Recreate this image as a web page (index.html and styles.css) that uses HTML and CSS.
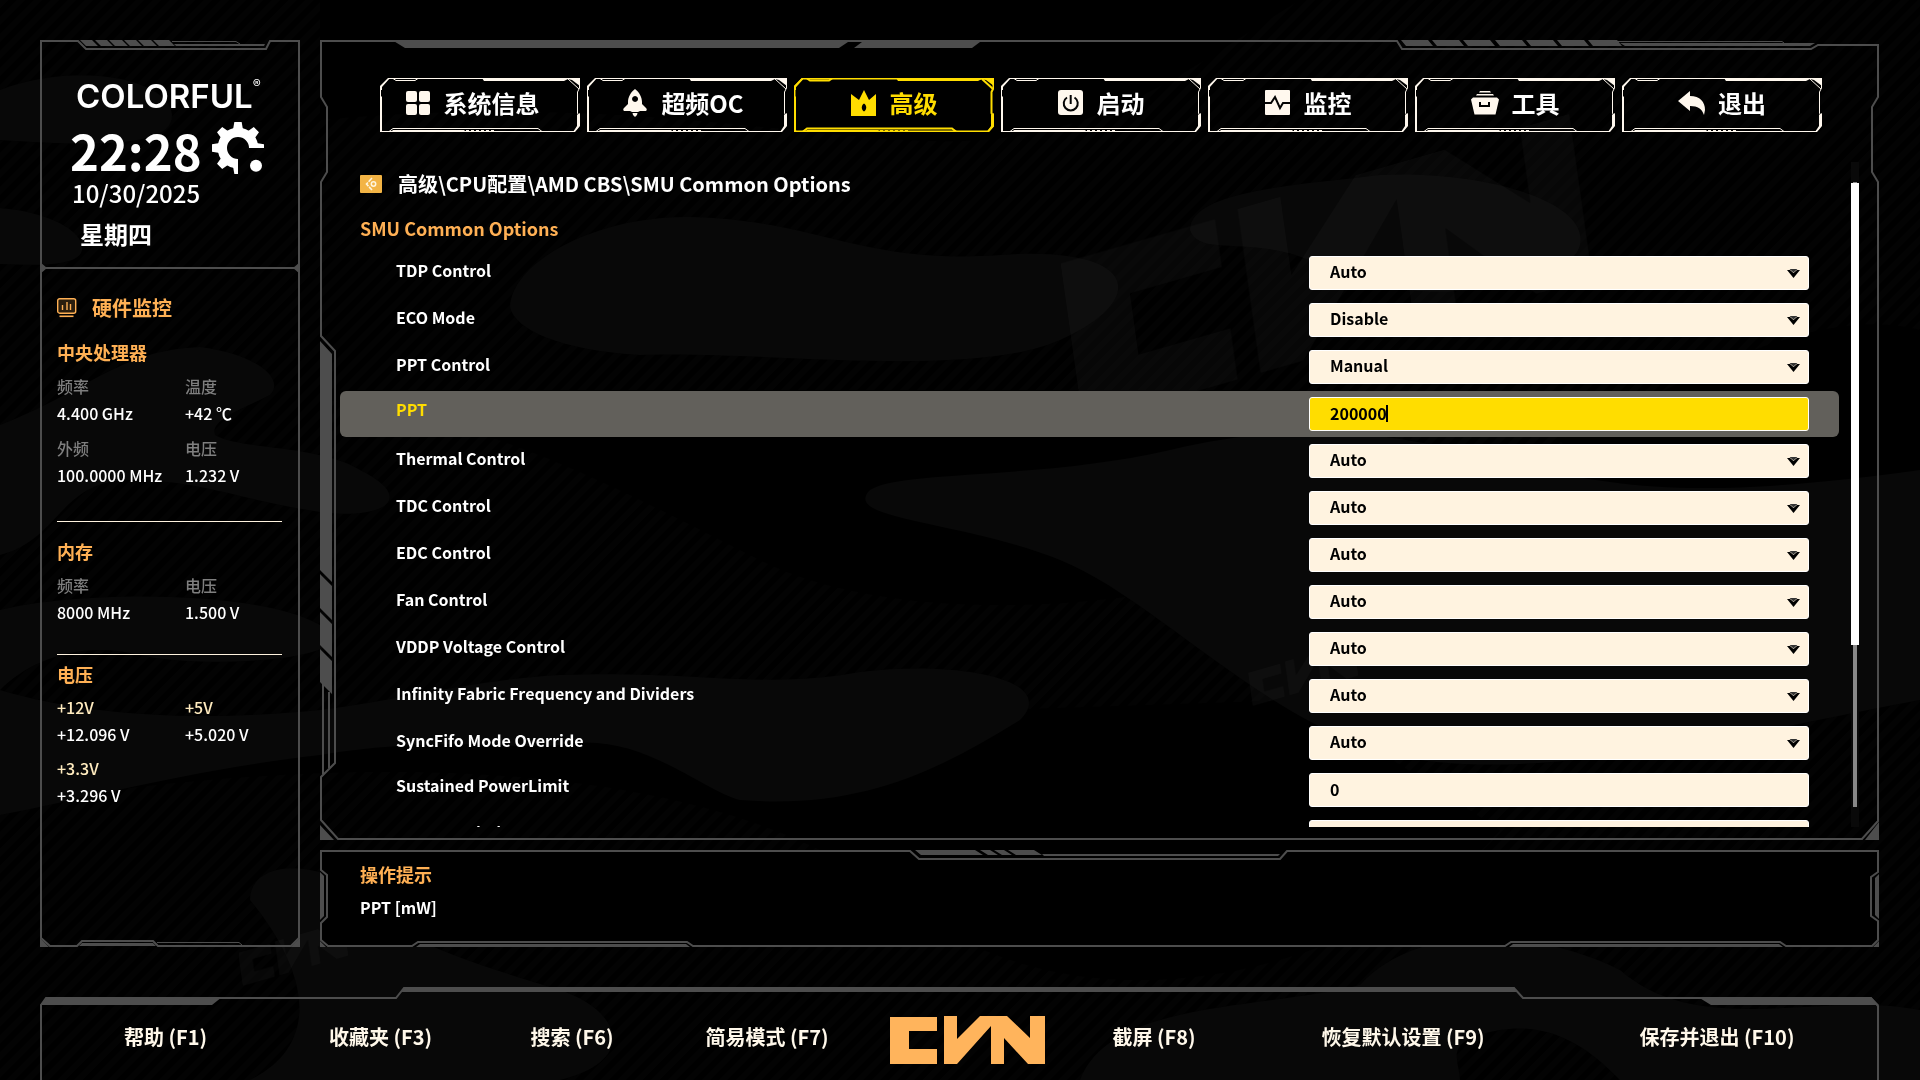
FILE: index.html
```
<!DOCTYPE html>
<html lang="zh-CN">

<head>
    <meta charset="UTF-8">
    <meta name="viewport" content="width=device-width, initial-scale=1.0">
    <title>COLORFUL CVN BIOS</title>
    <link rel="stylesheet" href="styles.css">
</head>

<body>
    <!-- shared shapes -->
    <svg class="defs" aria-hidden="true">
        <symbol id="cvn" viewBox="0 0 155 48">
            <path d="M0 1h47v14H19v18h28v15H0z" />
            <path d="M54 0h13v23L90 0h27l23 22V0h15v48h-17l-24-26v26h-13V10L67 48H54z" />
        </symbol>
        <symbol id="tabFrame" viewBox="0 0 200 54" preserveAspectRatio="none">
            <path fill="none" stroke="currentColor" d="M.5 52V9L8.500.5H199.500V10L197.500 14V35L199 38V48L194 53.500H2z" />
            <path fill="none" stroke="currentColor" d="M13 .5l3 2h19l3-2M9 53.500l4-3H158l4 3M188 1l11 10" />
            <path fill="currentColor" d="M0 8l8-8h2L2 9v3H0zM102 0h98v8l-8-6-4-1-4 2h-80zM0 17l2 2v35H0zM200 35v13l-5 6h-2l4-6V37zM13 52h72l-2 2H11z" />
            <path fill="none" stroke="currentColor" stroke-width="2" stroke-dasharray="3 2" d="M86 53h28" />
        </symbol>
    </svg>

    <svg class="backdrop" viewBox="0 0 1920 1080" preserveAspectRatio="xMidYMid slice" aria-hidden="true">
        <defs>
            <pattern id="stripes" width="12" height="12" patternUnits="userSpaceOnUse" patternTransform="rotate(-45)">
                <rect width="12" height="6" fill="#030303" />
            </pattern>
        </defs>
        <rect width="1920" height="1080" fill="url(#stripes)" />
        <g fill="#000">
            <path d="M560 0H1300C1200 60 1120 130 980 140S640 90 320 120V0z" />
            <path d="M330 400C500 420 640 500 760 560S1100 620 1300 560V390H330z" />
            <path d="M40 800C300 760 700 740 900 900S1400 950 1500 830L1300 700 700 720 40 750z" />
            <path d="M1560 440C1660 400 1800 300 1920 330V640H1700z" />
        </g>
        <g fill="#080808">
            <path d="M0 90C80 60 170 80 172 115S80 145 0 140z" />
            <path d="M0 208C50 212 85 232 82 250S30 265 0 264z" />
            <path d="M0 425C90 390 120 350 200 347C260 355 285 380 270 395C240 410 210 420 215 435C240 450 320 445 360 470C420 500 380 520 320 512C240 500 200 480 130 480S60 540 0 555z" />
            <path d="M0 610C80 590 260 590 320 625S200 670 140 655S30 660 0 690V815C80 800 190 770 320 755C440 735 520 750 560 745C640 730 700 790 740 800C860 810 940 770 1020 720C1060 680 960 660 860 672C760 690 700 670 560 675C470 680 400 700 320 710C220 720 100 720 0 690z" />
            <path d="M510 307C512 260 600 215 690 217C820 220 860 265 1000 255S1150 300 1060 340S760 350 640 355C560 350 515 330 510 307z" />
            <path d="M870 490C900 470 1040 480 1170 450S1380 430 1500 460S1700 500 1920 470V700C1760 730 1560 780 1420 760S1160 600 1060 560S840 520 870 490z" />
            <path d="M1190 230C1190 190 1300 185 1380 175C1480 170 1590 200 1580 245S1400 310 1330 270S1200 260 1190 230z" />
            <path d="M250 900C250 865 300 860 340 880C370 930 460 960 560 990C620 1010 640 1060 560 1080H250C330 1040 300 960 250 900z" />
            <path d="M1080 1080C1110 1000 1260 1010 1360 985C1420 920 1540 930 1620 970C1700 1040 1820 990 1920 1010V1080H1620C1600 1060 1560 1020 1500 1030S1460 1060 1460 1080z" />
        </g>
        <g fill="#fff" opacity=".03">
            <use href="#cvn" width="530" height="164" transform="translate(1060 260) rotate(-16) skewX(-8)" />
            <use href="#cvn" width="110" height="34" transform="translate(1248 672) rotate(-16) skewX(-8)" />
            <use href="#cvn" width="110" height="34" transform="translate(238 952) rotate(-16) skewX(-8)" />
        </g>
    </svg>

    <div class="screen">
        <aside class="sidebar">
            <svg class="frame" viewBox="40 40 260 907" preserveAspectRatio="none" aria-hidden="true">
                <path class="line" d="M41 41H78L86 49H266L270 41H299V938L291 946H158L153 941H82L77 946H50L41 938z" />
                <path class="line" d="M41 268H299" />
                <path class="fill" d="M80 40h12l6 6H86zM95 40h12l6 6h-12zM109 40h13l6 6h-13zM124 40h12l6 6h-12zM138 40h13l6 6h-13zM153 40h16l6 6h-16z" />
                <path class="fill" d="M174 44h91l-1 2h-88zM40 262l7 6-7 6zM300 262l-7 6 7 6zM40 938l9 9h-9zM300 938l-9 9h9zM82 943h71l3 3H79z" />
                <path class="hair" d="M172 41.500H236L240 44M157 942.500H239L242 945" />
            </svg>

            <header class="clock">
                <div class="brand">COLORFUL<sup>®</sup></div>
                <div class="time-row">
                    <time class="time">22:28</time>
                    <svg class="gear" viewBox="-78 -78 156 156" aria-hidden="true">
                        <clipPath id="gearCut">
                            <path d="M-80-80H80V0H34A34 34 0 0 0 0 34V80H-80z" />
                        </clipPath>
                        <g clip-path="url(#gearCut)" fill="currentColor">
                            <circle r="47" fill="none" stroke="currentColor" stroke-width="28" />
                            <path id="teeth" d="M-15-55l4-23h22l4 23zM-15 55l4 23h22l4-23zM-55-15l-23 4v22l23 4zM55-15l23 4v22l-23 4z" />
                            <use href="#teeth" transform="rotate(45)" />
                        </g>
                        <circle cx="54" cy="53" r="18" fill="currentColor" />
                    </svg>
                </div>
                <div class="date">10/30/2025</div>
                <div class="weekday">星期四</div>
            </header>

            <section class="monitor">
                <h2>
                    <svg width="20" height="20" viewBox="0 0 20 20" fill="none" stroke="currentColor" aria-hidden="true">
                        <rect x=".7" y=".7" width="18" height="14.500" rx="2" fill="#2b1e0e" stroke-width="1.400" />
                        <path d="M5.500 7v5M10 4v8M13.500 6v6" stroke-width="1.400" />
                        <path d="M2.500 18.300h14" stroke-width="1.600" />
                    </svg>
                    硬件监控
                </h2>

                <div class="group">
                    <h3>中央处理器</h3>
                    <dl>
                        <div><dt>频率</dt><dd>4.400 GHz</dd></div>
                        <div><dt>温度</dt><dd>+42 ℃</dd></div>
                        <div><dt>外频</dt><dd>100.0000 MHz</dd></div>
                        <div><dt>电压</dt><dd>1.232 V</dd></div>
                    </dl>
                </div>
                <div class="group">
                    <h3>内存</h3>
                    <dl>
                        <div><dt>频率</dt><dd>8000 MHz</dd></div>
                        <div><dt>电压</dt><dd>1.500 V</dd></div>
                    </dl>
                </div>
                <div class="group volts">
                    <h3>电压</h3>
                    <dl>
                        <div><dt>+12V</dt><dd>+12.096 V</dd></div>
                        <div><dt>+5V</dt><dd>+5.020 V</dd></div>
                        <div><dt>+3.3V</dt><dd>+3.296 V</dd></div>
                    </dl>
                </div>
            </section>
        </aside>

        <main class="panel">
            <svg class="frame" viewBox="320 40 1559 800" preserveAspectRatio="none" aria-hidden="true">
                <path class="line" d="M321 41H1397L1402 49H1811L1818 45H1878V97L1872 107V172L1878 182V821L1862 839H338L321 820V777L335 763V351L321 336V182L327 172V107L321 97z" />
                <path class="fill" d="M392 40H851L839 48H405zM862 42H980L972 48H854z" />
                <path class="fill" d="M1401 40h27l5 6h-27zM1432 40h27l5 6h-27zM1463 40h27l5 6h-27zM1495 40h27l5 6h-27zM1526 40h27l5 6h-27zM1557 40h27l5 6h-27zM1588 40h29l5 6h-29z" />
                <path class="fill" d="M1620 43h195l-5 3H1625zM1879 822v18h-14zM320 825v15h14z" />
                <path class="fill" d="M320 341l12 13V582L320 570zM320 574l12 12v34l-12-12zM320 612l12 12v33l-12-12zM320 649l12 12v33l-12-12z" />
                <path class="line" d="M323 684V774M329 692V768" />
                <path class="hair" d="M1617 41.500H1782L1784 43" />
            </svg>

            <nav class="tabs">
                <button type="button" class="tab wide-label">
                    <svg class="tab-frame"><use href="#tabFrame" /></svg>
                    <svg class="icon" width="26" height="26" viewBox="0 0 26 26" fill="currentColor">
                        <rect x="1" y="1" width="11" height="11" rx="2" /><rect x="14" y="1" width="11" height="11" rx="2" />
                        <rect x="1" y="14" width="11" height="11" rx="2" /><rect x="14" y="14" width="11" height="11" rx="2" />
                    </svg>
                    <span>系统信息</span>
                </button>
                <button type="button" class="tab mid-label">
                    <svg class="tab-frame"><use href="#tabFrame" /></svg>
                    <svg class="icon" width="26" height="28" viewBox="0 0 26 28" fill="currentColor">
                        <path fill-rule="evenodd" d="M13 0C17 3 20 8 20 13v2l4 4c1 1 1 2 0 3h-6l-2 1h-6l-2-1H2c-1-1-1-2 0-3l4-4v-2C6 8 9 3 13 0zM13 7a3 3 0 1 0 .1 0z" />
                        <path d="M10.500 24h5l-.5 2-2 2-2-2z" />
                    </svg>
                    <span>超频OC</span>
                </button>
                <button type="button" class="tab active">
                    <svg class="tab-frame"><use href="#tabFrame" /></svg>
                    <svg class="icon" width="26" height="26" viewBox="0 0 26 26" fill="currentColor">
                        <path fill-rule="evenodd" d="M0 4l8 6 5-10 5 10 7-6v22H0zM13 13.500c-3 2-3 6 0 8 3-2 3-6 0-8z" />
                    </svg>
                    <span>高级</span>
                </button>
                <button type="button" class="tab">
                    <svg class="tab-frame"><use href="#tabFrame" /></svg>
                    <svg class="icon" width="26" height="26" viewBox="0 0 26 26">
                        <rect width="25" height="25" rx="3" fill="currentColor" />
                        <path d="M9 7.500a7 7 0 1 0 7.500 0M12.700 5v9" fill="none" stroke="#050505" stroke-width="2" />
                    </svg>
                    <span>启动</span>
                </button>
                <button type="button" class="tab">
                    <svg class="tab-frame"><use href="#tabFrame" /></svg>
                    <svg class="icon" width="26" height="26" viewBox="0 0 26 26">
                        <rect width="25" height="25" rx="1" fill="currentColor" />
                        <path d="M0 13h6l4-6 5 11 3-5h7" fill="none" stroke="#050505" stroke-width="2" />
                    </svg>
                    <span>监控</span>
                </button>
                <button type="button" class="tab">
                    <svg class="tab-frame"><use href="#tabFrame" /></svg>
                    <svg class="icon" width="28" height="24" viewBox="0 0 28 24" fill="currentColor">
                        <path d="M9 0h10l1 1.500H8zM6 3h16l1 1.500H5z" />
                        <path fill-rule="evenodd" d="M2 6.500h24l2 2-3.500 15H3.500L0 8.500zM8 11v5h11v-5h-2v3h-7v-3z" />
                    </svg>
                    <span>工具</span>
                </button>
                <button type="button" class="tab">
                    <svg class="tab-frame"><use href="#tabFrame" /></svg>
                    <svg class="icon" width="27" height="24" viewBox="0 0 27 24" fill="currentColor">
                        <path d="M0 10L12 0v5c10 0 15 6 15 14l-1 5c-2-6-6-9-14-9v5z" />
                    </svg>
                    <span>退出</span>
                </button>
            </nav>

            <div class="scroller">
                <div class="content">
                    <h1 class="crumb">
                        <svg width="22" height="18" viewBox="0 0 22 18" fill="none" stroke="#fff6e0" aria-hidden="true">
                            <rect width="22" height="18" rx="1" fill="#f3b445" stroke="none" />
                            <path d="M12 3L6.500 9l5.500 6" stroke-width="1.600" stroke-dasharray="5 1" />
                            <circle cx="13.500" cy="9" r="2.200" stroke-width="1.500" />
                        </svg>
                        高级\CPU配置\AMD CBS\SMU Common Options
                    </h1>
                    <h2 class="section-title">SMU Common Options</h2>

                    <form class="options">
                        <div class="row">
                            <label for="tdp">TDP Control</label>
                            <select id="tdp"><option>Auto</option><option>Manual</option></select>
                        </div>
                        <div class="row">
                            <label for="eco">ECO Mode</label>
                            <select id="eco"><option>Disable</option><option>Enable</option></select>
                        </div>
                        <div class="row">
                            <label for="pptControl">PPT Control</label>
                            <select id="pptControl"><option>Manual</option><option>Auto</option></select>
                        </div>
                        <div class="row number selected">
                            <label for="ppt">PPT</label>
                            <input type="text" id="ppt" value="200000">
                        </div>
                        <div class="row">
                            <label for="thermal">Thermal Control</label>
                            <select id="thermal"><option>Auto</option><option>Manual</option></select>
                        </div>
                        <div class="row">
                            <label for="tdc">TDC Control</label>
                            <select id="tdc"><option>Auto</option><option>Manual</option></select>
                        </div>
                        <div class="row">
                            <label for="edc">EDC Control</label>
                            <select id="edc"><option>Auto</option><option>Manual</option></select>
                        </div>
                        <div class="row">
                            <label for="fan">Fan Control</label>
                            <select id="fan"><option>Auto</option><option>Manual</option></select>
                        </div>
                        <div class="row">
                            <label for="vddp">VDDP Voltage Control</label>
                            <select id="vddp"><option>Auto</option><option>Manual</option></select>
                        </div>
                        <div class="row">
                            <label for="fabric">Infinity Fabric Frequency and Dividers</label>
                            <select id="fabric"><option>Auto</option></select>
                        </div>
                        <div class="row">
                            <label for="syncfifo">SyncFifo Mode Override</label>
                            <select id="syncfifo"><option>Auto</option></select>
                        </div>
                        <div class="row number">
                            <label for="sustained">Sustained PowerLimit</label>
                            <input type="text" id="sustained" value="0">
                        </div>
                        <div class="row number">
                            <label for="fast">Fast PPT Limit</label>
                            <input type="text" id="fast" value="0">
                        </div>
                    </form>
                </div>
                <div class="scrollbar"><div class="thumb"></div></div>
            </div>
        </main>

        <section class="help">
            <svg class="frame" viewBox="320 850 1559 97" preserveAspectRatio="none" aria-hidden="true">
                <path class="line" d="M321 851H910L919 859H1280L1287 851H1878V872L1871 877V916L1878 921V940L1872 946H1786L1780 942H1511L1505 946H693L687 942H418L412 946H328L321 940V923L327 917V875L321 870z" />
                <path class="fill" d="M915 850h60l8 5h-62zM980 850h10l8 5h-10zM994 850h10l8 5h-10zM1008 850h26l8 5h-26zM1042 854h238l-2 2H1044z" />
                <path class="fill" d="M320 872l4 4v40l-4 4zM1879 874l-4 4v37l4 4zM320 941l6 6h-6zM1879 941l-6 6h6zM420 944h266l4 3H416zM1513 944h266l4 3h-274z" />
            </svg>
            <h2>操作提示</h2>
            <p>PPT [mW]</p>
        </section>

        <footer class="keys">
            <svg class="frame" viewBox="40 987 1839 93" preserveAspectRatio="none" aria-hidden="true">
                <path class="line" d="M41 1080V1005L46 998H396L404 988H1514L1523 998H1871L1878 1006V1080" />
                <path class="fill" d="M40 1005L48 997H222L212 1005zM405 987H1514L1517 992H401zM1698 997H1871L1879 1005H1711z" />
            </svg>
            <button type="button">帮助 (F1)</button>
            <button type="button">收藏夹 (F3)</button>
            <button type="button">搜索 (F6)</button>
            <button type="button">简易模式 (F7)</button>
            <svg class="cvn-logo" role="img" aria-label="CVN"><use href="#cvn" /></svg>
            <button type="button">截屏 (F8)</button>
            <button type="button">恢复默认设置 (F9)</button>
            <button type="button">保存并退出 (F10)</button>
        </footer>
    </div>
</body>

</html>
```
FILE: styles.css
```
* {
    box-sizing: border-box;
}

body {
    margin: 0;
    background: #000;
    color: #fff;
    font-family: "Noto Sans CJK SC", "Noto Sans", sans-serif;
    font-size: 16px;
    font-weight: 700;
}

h1,
h2,
h3,
p,
dl,
dd {
    margin: 0;
}

button,
select,
input {
    font: inherit;
    border: 0;
    padding: 0;
    background: none;
    color: inherit;
}

.defs {
    position: absolute;
    width: 0;
    height: 0;
}

.backdrop {
    position: fixed;
    inset: 0;
    z-index: -1;
    width: 100%;
    height: 100%;
}

.screen {
    display: grid;
    grid-template-columns: 260px 1fr;
    grid-template-rows: 1fr 97px 133px;
    column-gap: 20px;
    height: 100vh;
    padding: 40px 41px 0 40px;
}

/* metal borders drawn round every panel */
.frame {
    position: absolute;
    inset: 0;
    z-index: -1;
    width: 100%;
    height: 100%;
}

.line,
.hair {
    fill: none;
    stroke: #4d4d4d;
    stroke-width: 2;
}

.hair {
    stroke-width: 1;
}

.fill {
    fill: #4d4d4d;
}

/* sidebar */
.sidebar {
    position: relative;
    grid-row: 1 / 3;
}

.clock {
    height: 229px;
    padding: 40px 0 0 30px;
}

.brand {
    display: flex;
    padding-left: 6px;
    font-family: Inter, "Liberation Sans", sans-serif;
    font-size: 33px;
    font-weight: 600;
    line-height: 32px;
}

.brand sup {
    font-size: 12px;
    font-weight: 400;
    line-height: 8px;
}

.time-row {
    display: flex;
    align-items: flex-start;
    gap: 10px;
    height: 56px;
    margin-top: 10px;
}

.time {
    font-size: 49px;
    line-height: 56px;
}

.gear {
    width: 52px;
    height: 52px;
}

.date {
    padding-left: 2px;
    font-size: 24px;
    font-weight: 500;
    line-height: 30px;
}

.weekday {
    margin-top: 12px;
    padding-left: 10px;
    font-size: 24px;
    line-height: 28px;
}

.monitor {
    padding: 24px 18px 0 17px;
}

.monitor h2,
.monitor h3,
.section-title,
.help h2 {
    color: #ffb054;
}

.monitor h2 {
    display: flex;
    align-items: center;
    gap: 15px;
    font-size: 20px;
    line-height: 30px;
}

.monitor h3 {
    margin-bottom: 7px;
    font-size: 18px;
    line-height: 28px;
}

.group {
    padding: 15px 0 28px;
    border-bottom: 1px solid #fff3df;
}

.group:nth-of-type(1) {
    padding: 15px 0 32px;
}

.monitor .volts {
    padding: 5px 0 0;
    border: 0;
}

.monitor dl {
    display: grid;
    grid-template-columns: 128px 1fr;
    row-gap: 8px;
    font-weight: 500;
    line-height: 27px;
    white-space: nowrap;
}

.monitor dt {
    color: #7f7f7f;
}

.monitor .volts h3 {
    margin-bottom: 6px;
}

.monitor .volts dl {
    row-gap: 7px;
}

.monitor .volts dt {
    color: #ffebbf;
}

/* main panel */
.panel {
    position: relative;
    display: flex;
    flex-direction: column;
    min-height: 0;
    margin-bottom: 10px;
    padding: 38px 20px 13px;
}

.tabs {
    display: grid;
    grid-template-columns: repeat(7, 1fr);
    gap: 7px;
    margin: 0 37px 30px 40px;
}

.tab {
    position: relative;
    display: flex;
    align-items: center;
    justify-content: center;
    gap: 13px;
    height: 54px;
    padding-bottom: 4px;
    color: #fff;
    font-size: 24px;
    line-height: 32px;
}

.tab svg {
    color: #fff8ee;
}

.tab-frame {
    position: absolute;
    inset: 0;
    width: 100%;
    height: 100%;
}

.wide-label {
    padding-right: 16px;
}

.mid-label {
    padding-right: 8px;
}

.tab.active,
.tab.active svg {
    color: #fd0;
}

.tab.active .tab-frame {
    stroke-width: 2;
}

.scroller {
    display: flex;
    flex: 1;
    gap: 12px;
    min-height: 0;
}

.content {
    flex: 1;
    overflow: hidden;
    padding-top: 7px;
}

.crumb {
    display: flex;
    align-items: center;
    gap: 16px;
    margin: 0 0 14px 20px;
    font-size: 20px;
    line-height: 30px;
}

.section-title {
    margin: 0 0 7px 20px;
    font-size: 18px;
    line-height: 30px;
}

.row {
    display: flex;
    justify-content: space-between;
    align-items: flex-start;
    height: 46px;
    margin-bottom: 1px;
    padding: 0 30px 0 56px;
    border-radius: 6px;
}

.row label {
    line-height: 40px;
}

.row.number label {
    line-height: 36px;
}

.row select,
.row input {
    flex: 0 1 500px;
    height: 34px;
    margin-top: 6px;
    padding: 0 20px 2px;
    border: 1px solid #fff;
    border-radius: 3px;
    background: #fff3e0;
    color: #000;
}

.row select {
    appearance: none;
    padding-bottom: 4px;
    background: #fff3e0 url("data:image/svg+xml,%3Csvg xmlns='http://www.w3.org/2000/svg' width='13' height='10'%3E%3Cpath d='M0 2h3l3.500 3L10 2h3L6.500 10z'/%3E%3Cpath d='M2.500 1h8L6.500 4.500z' fill='%23333'/%3E%3C/svg%3E") no-repeat right 8px center;
}

.row.selected {
    background: #62605b;
}

.row.selected label {
    color: #fd0;
}

/* the gradient is the text cursor */
.row.selected input {
    background: linear-gradient(#000, #000) no-repeat 76px 7px / 2px 17px #fd0;
}

.scrollbar {
    width: 8px;
    padding: 21px 0 20px;
    background: linear-gradient(#888, #888) no-repeat center / 4px calc(100% - 40px) #090909;
}

.thumb {
    height: 74%;
    background: #fff;
}

/* help panel */
.help {
    position: relative;
    padding: 10px 40px;
    background: #000;
    isolation: isolate;
}

.help h2 {
    font-size: 18px;
    line-height: 28px;
}

.help p {
    margin-top: 6px;
    line-height: 26px;
}

/* function keys */
.keys {
    position: relative;
    display: grid;
    grid-column: 1 / 3;
    grid-template-columns: 251fr 179fr 204fr 186fr 215fr 158fr 340fr 288fr 18fr;
    align-items: center;
    justify-items: center;
    margin-top: 40px;
    padding-top: 6px;
}

.keys button {
    color: #fff8ea;
    font-size: 20px;
    line-height: 30px;
    white-space: nowrap;
}

.cvn-logo {
    width: 155px;
    height: 48px;
    margin-top: 6px;
    fill: #ffb45c;
}
```
